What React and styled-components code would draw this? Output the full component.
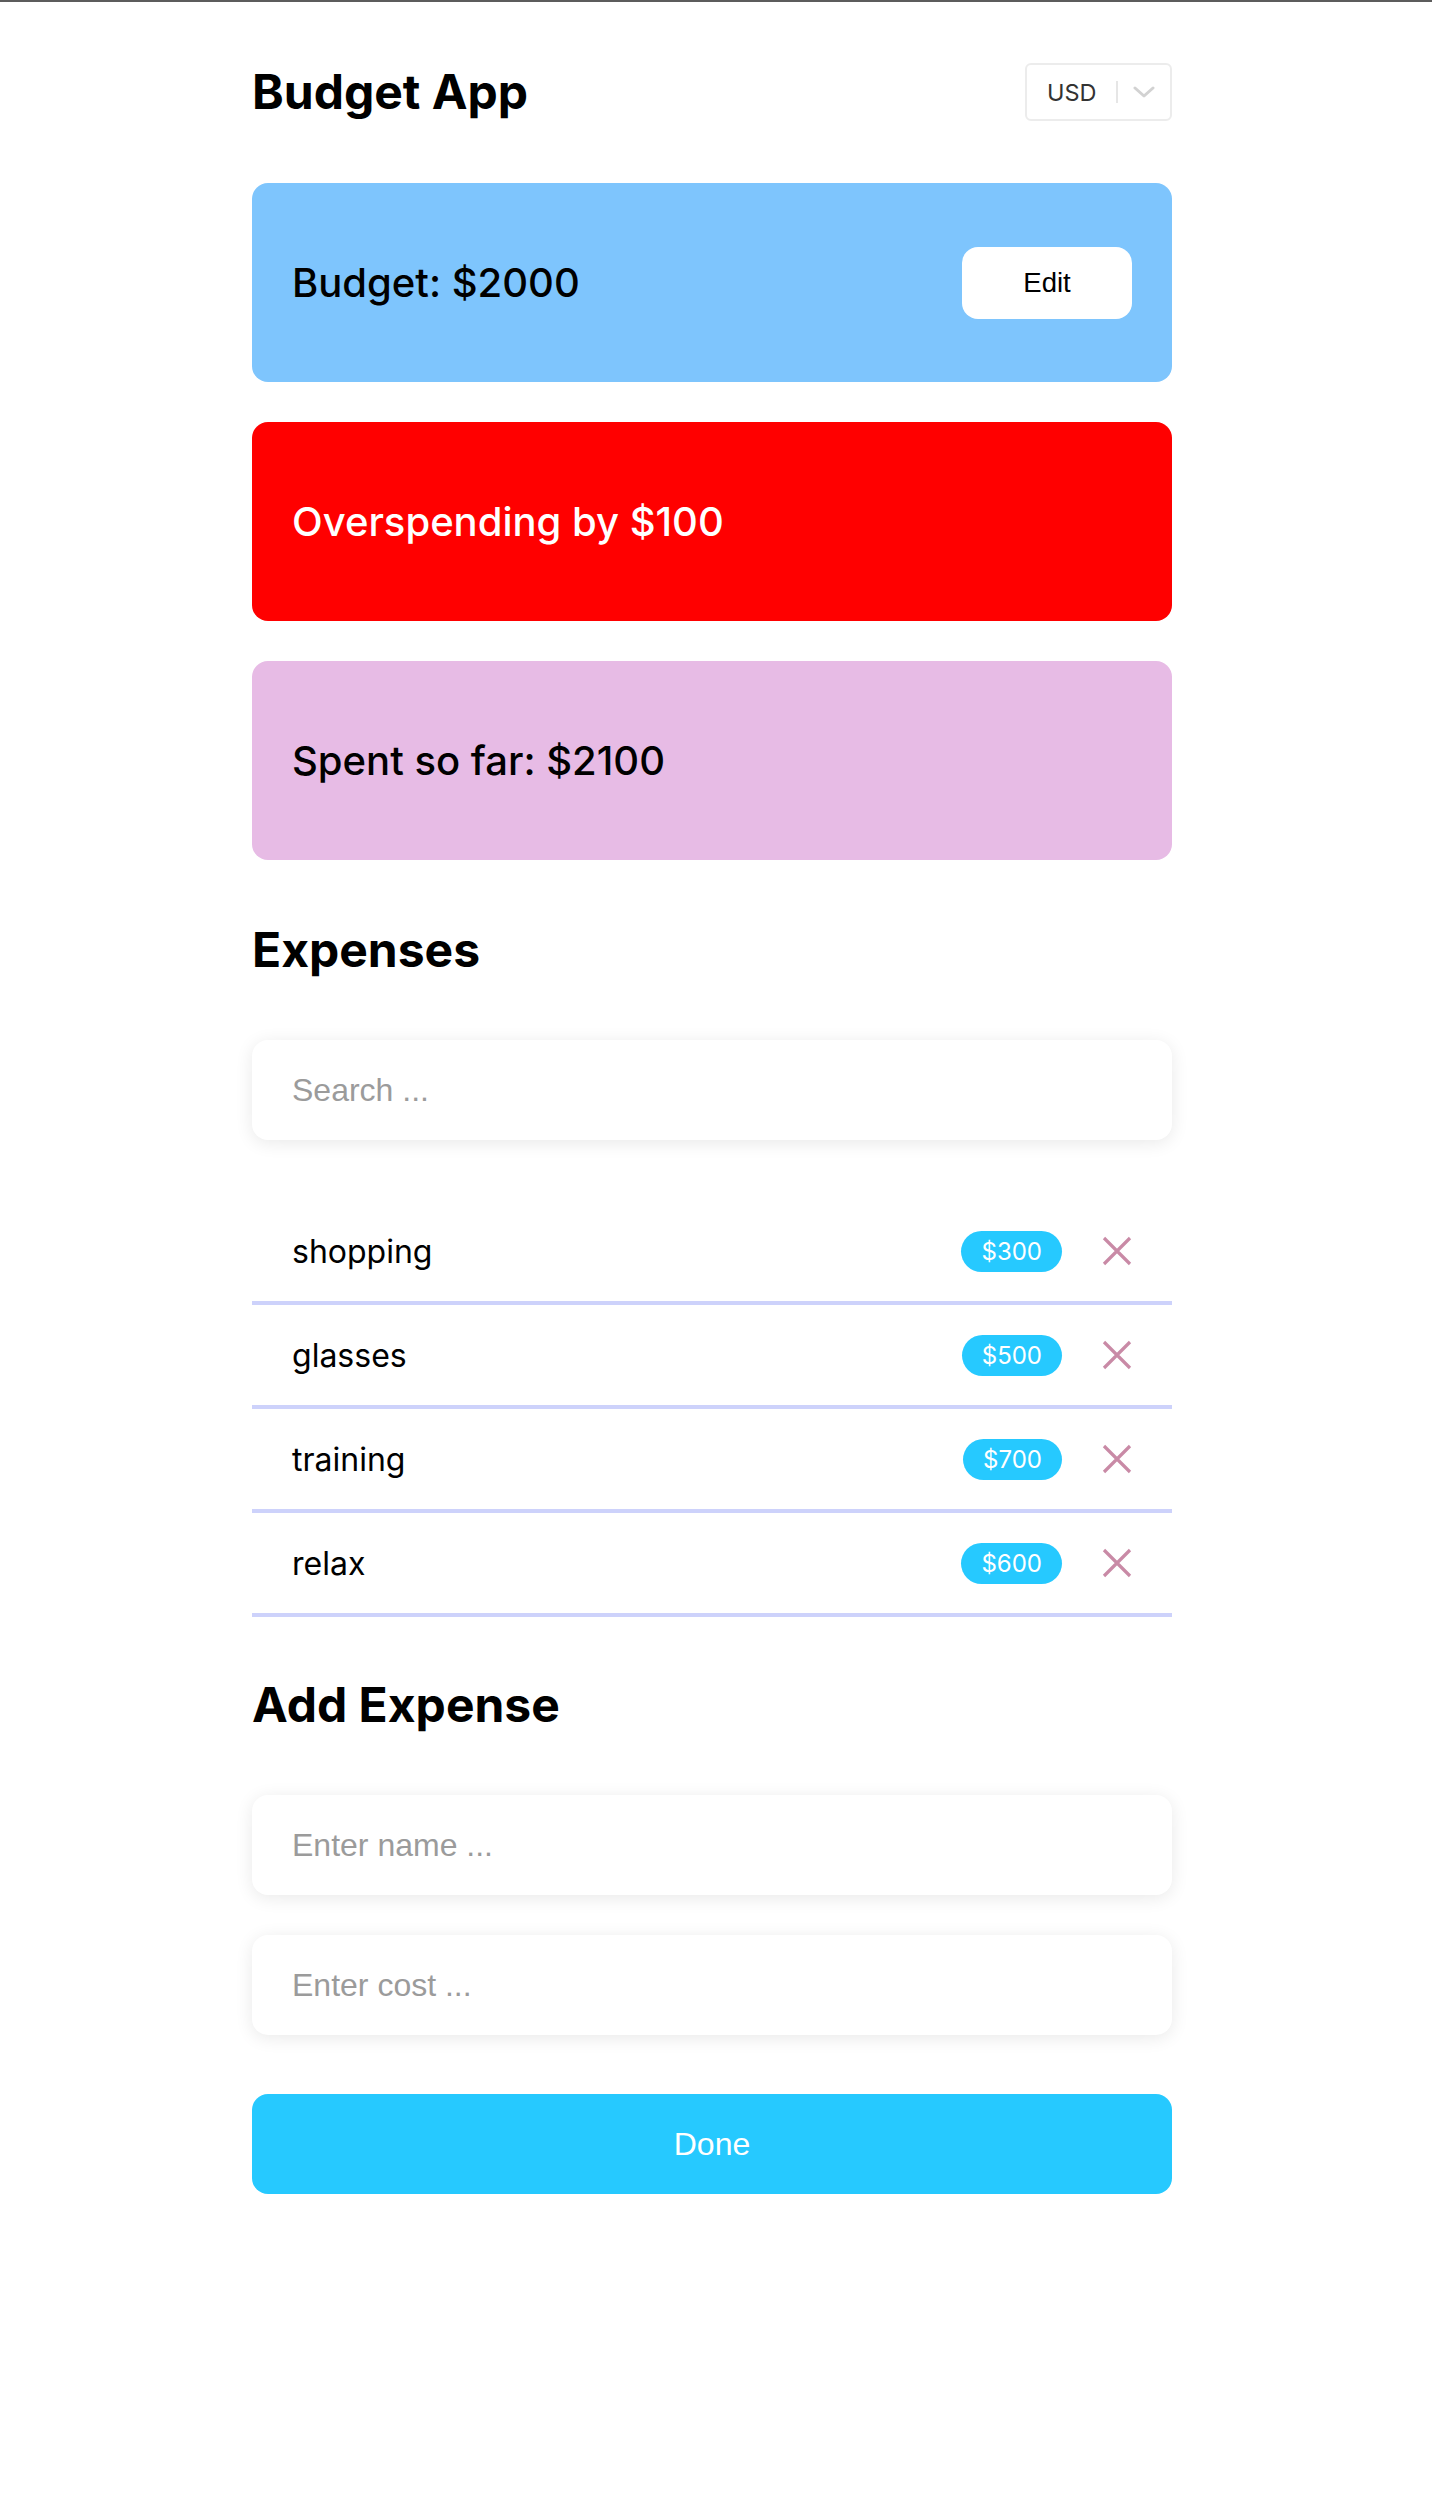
import React from "react";
import styled, { createGlobalStyle } from "styled-components";

const GlobalStyle = createGlobalStyle`
  * { box-sizing: border-box; }
  html, body { margin: 0; padding: 0; background: #ffffff; }
  body {
    border-top: 2px solid #5c5c5c;
    font-family: Inter, "Noto Sans", sans-serif;
    color: #000;
  }
`;

const Page = styled.div`
  padding: 0 8px 200px 0;
`;

const Container = styled.main`
  width: 920px;
  margin: 0 auto;
  display: flex;
  flex-direction: column;
`;

const Header = styled.header`
  display: flex;
  align-items: center;
  justify-content: space-between;
  height: 58px;
  margin-top: 61px;
  margin-bottom: 62px;
`;

const Title = styled.h1`
  margin: 0;
  font-size: 48px;
  font-weight: 700;
  line-height: 58px;
`;

const Select = styled.div`
  width: 147px;
  height: 58px;
  border: 2px solid #ececec;
  border-radius: 6px;
  display: flex;
  align-items: center;
  padding-left: 20px;
  background: #fff;
`;

const SelectValue = styled.span`
  font-size: 23.5px;
  color: #333;
  flex: 1;
`;

const SelectSep = styled.span`
  width: 2px;
  height: 22px;
  background: #e6e6e6;
`;

const SelectArrow = styled.span`
  width: 52px;
  display: flex;
  align-items: center;
  justify-content: center;
`;

const Cards = styled.section`
  display: flex;
  flex-direction: column;
  gap: 40px;
`;

const Card = styled.div`
  height: 199px;
  border-radius: 16px;
  background: ${(p) => p.$bg};
  color: ${(p) => p.$fg || "#000"};
  display: flex;
  align-items: center;
  justify-content: space-between;
  padding: 0 40px;
`;

const CardText = styled.span`
  font-size: 40px;
  font-weight: 500;
`;

const EditButton = styled.button`
  width: 170px;
  height: 72px;
  border: none;
  border-radius: 16px;
  background: #fff;
  color: #000;
  font-family: "Liberation Sans", Arial, sans-serif;
  font-size: 27.5px;
  cursor: pointer;
`;

const SectionTitle = styled.h2`
  margin: ${(p) => p.$mt || 62}px 0 62px;
  font-size: 48px;
  font-weight: 700;
  line-height: 56px;
`;

const Input = styled.input`
  width: 100%;
  height: 100px;
  border: none;
  outline: none;
  border-radius: 16px;
  background: #fff;
  box-shadow: 0 3px 18px rgba(0, 0, 0, 0.09);
  padding: 0 40px;
  font-family: "Liberation Sans", Arial, sans-serif;
  font-size: 32px;
  color: #000;
  &::placeholder { color: #9b9b9b; }
`;

const List = styled.ul`
  list-style: none;
  margin: 61px 0 0;
  padding: 0;
`;

const Row = styled.li`
  height: 104px;
  border-bottom: 4px solid #cdd2fb;
  display: flex;
  align-items: center;
  padding: 0 40px;
`;

const RowName = styled.span`
  flex: 1;
  font-size: 32px;
  font-weight: 400;
`;

const Badge = styled.span`
  height: 41px;
  padding: 0 20px;
  border-radius: 21px;
  background: #26c9ff;
  color: #fff;
  font-size: 24px;
  display: flex;
  align-items: center;
  margin-right: 40px;
`;

const RemoveIcon = styled.svg`
  width: 30px;
  height: 30px;
  display: block;
`;

const Form = styled.form`
  display: flex;
  flex-direction: column;
  gap: 40px;
`;

const DoneButton = styled.button`
  height: 100px;
  margin-top: 19px;
  border: none;
  border-radius: 16px;
  background: #26c9ff;
  color: #fff;
  font-family: "Liberation Sans", Arial, sans-serif;
  font-size: 32px;
  cursor: pointer;
`;

const expenses = [
  { name: "shopping", cost: 300 },
  { name: "glasses", cost: 500 },
  { name: "training", cost: 700 },
  { name: "relax", cost: 600 },
];

export default function App() {
  return (
    <Page>
      <GlobalStyle />
      <Container>
        <Header>
          <Title>Budget App</Title>
          <Select>
            <SelectValue>USD</SelectValue>
            <SelectSep />
            <SelectArrow>
              <svg width="22" height="12" viewBox="0 0 22 12">
                <path d="M2 2 L11 10 L20 2" fill="none" stroke="#d2d2d2" strokeWidth="3" strokeLinecap="round" strokeLinejoin="round" />
              </svg>
            </SelectArrow>
          </Select>
        </Header>

        <Cards>
          <Card $bg="#7ec5fd">
            <CardText>Budget: $2000</CardText>
            <EditButton type="button">Edit</EditButton>
          </Card>
          <Card $bg="#ff0000" $fg="#ffffff">
            <CardText>Overspending by $100</CardText>
          </Card>
          <Card $bg="#e7bbe5">
            <CardText>Spent so far: $2100</CardText>
          </Card>
        </Cards>

        <SectionTitle>Expenses</SectionTitle>
        <Input placeholder="Search ..." />

        <List>
          {expenses.map((e) => (
            <Row key={e.name}>
              <RowName>{e.name}</RowName>
              <Badge>${e.cost}</Badge>
              <RemoveIcon viewBox="0 0 30 30">
                <path d="M2 2 L28 28 M28 2 L2 28" stroke="#c98aa6" strokeWidth="3.2" strokeLinecap="butt" />
              </RemoveIcon>
            </Row>
          ))}
        </List>

        <SectionTitle $mt={60}>Add Expense</SectionTitle>
        <Form onSubmit={(ev) => ev.preventDefault()}>
          <Input placeholder="Enter name ..." />
          <Input placeholder="Enter cost ..." />
          <DoneButton type="submit">Done</DoneButton>
        </Form>
      </Container>
    </Page>
  );
}
